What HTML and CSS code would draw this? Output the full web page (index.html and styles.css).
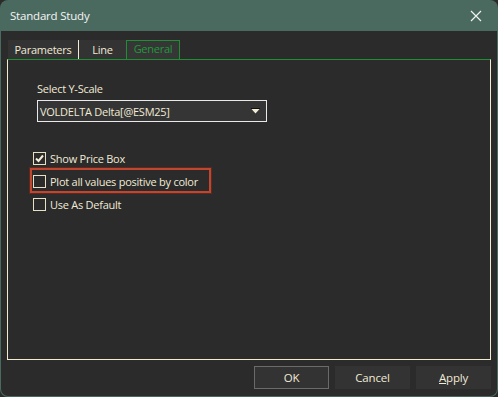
FILE: index.html
```html
<!DOCTYPE html>
<html lang="en">
<head>
    <meta charset="UTF-8">
    <title>Standard Study</title>
    <link rel="stylesheet" href="styles.css">
</head>
<body>
    <div class="window">
        <div class="titlebar">
            <span class="title">Standard Study</span>
            <svg class="close" width="12" height="12" viewBox="0 0 12 12">
                <path d="M1 1 L11 11 M11 1 L1 11" stroke="#f2f2f2" stroke-width="1.2" fill="none"/>
            </svg>
        </div>
        <div class="client">
            <div class="tabs">
                <div class="tab tab-params">Parameters</div>
                <div class="tab tab-line">Line</div>
                <div class="tab tab-general active">General</div>
            </div>
            <div class="panel">
                <div class="field">
                    <label class="field-label">Select Y-Scale</label>
                    <div class="select">
                        <span>VOLDELTA Delta[@ESM25]</span>
                        <svg class="arrow" width="9" height="6" viewBox="0 0 9 6">
                            <path d="M0 0.5 L9 0.5" stroke="#111" stroke-width="1"/>
                            <path d="M0.5 1 L8.5 1 L4.5 5.5 Z" fill="#f3ecd6"/>
                        </svg>
                    </div>
                </div>
                <div class="checks">
                    <div class="check">
                        <span class="box">
                            <svg width="11" height="11" viewBox="0 0 11 11">
                                <path d="M2 5.5 L4.5 8 L9 2.5" stroke="#f3ecd6" stroke-width="2" fill="none"/>
                            </svg>
                        </span>
                        <span>Show Price Box</span>
                    </div>
                    <div class="check marked">
                        <span class="box"></span>
                        <span>Plot all values positive by color</span>
                    </div>
                    <div class="check">
                        <span class="box"></span>
                        <span>Use As Default</span>
                    </div>
                </div>
            </div>
            <div class="buttons">
                <button class="btn default">OK</button>
                <button class="btn">Cancel</button>
                <button class="btn"><u>A</u>pply</button>
            </div>
        </div>
    </div>
</body>
</html>
```

FILE: styles.css
```css
body {
    margin: 0;
    padding: 0;
    background: #2b2b2b;
    font-family: "Open Sans", Arial, sans-serif;
    font-size: 11px;
    letter-spacing: -0.25px;
    color: #f1ead6;
}
.window {
    width: 498px;
    height: 397px;
    background: #4a6a60;
    border-radius: 8px 8px 8px 8px;
    display: flex;
    flex-direction: column;
    box-sizing: border-box;
}
.titlebar {
    height: 31px;
    display: flex;
    align-items: center;
    justify-content: space-between;
    padding: 0 16px 0 10px;
    flex-shrink: 0;
}
.title {
    color: #f4f4f4;
    font-size: 11.5px;
    letter-spacing: -0.2px;
}
.close {
    display: block;
}
.client {
    flex: 1;
    background: #2b2b2b;
    margin: 0 1px 1px 1px;
    border-radius: 0 0 7px 7px;
    padding: 9px 6px 7px 6px;
    display: flex;
    flex-direction: column;
}
.tabs {
    display: flex;
    height: 19px;
    padding-left: 1px;
}
.tab {
    background: #333333;
    line-height: 20px;
    text-align: center;
    box-sizing: border-box;
}
.tab-params {
    width: 70px;
}
.tab-line {
    width: 48px;
    border-left: 1px solid #f1ead6;
}
.tab-general {
    width: 54px;
}
.tab.active {
    background: #363636;
    color: #1f9a3a;
    border: 1px solid #1e8f32;
    border-bottom: none;
    line-height: 16px;
}
.panel {
    flex: 1;
    border: 1px solid #f4ebcc;
    border-top: 1px solid #1e8f32;
    padding: 21px 0 0 25px;
}
.field {
    margin-left: 4px;
}
.field-label {
    display: block;
    line-height: 15px;
    margin-bottom: 4px;
}
.select {
    width: 230px;
    height: 22px;
    box-sizing: border-box;
    border: 1px solid #e9e9e9;
    background: #353535;
    display: flex;
    align-items: center;
    justify-content: space-between;
    padding: 0 6px 0 2px;
}
.arrow {
    display: block;
}
.checks {
    margin-top: 29px;
    display: flex;
    flex-direction: column;
    gap: 9px;
}
.check {
    display: flex;
    align-items: center;
    gap: 4px;
    height: 14px;
    position: relative;
}
.box {
    width: 13px;
    height: 13px;
    border: 1px solid #e8e0c4;
    box-sizing: border-box;
    display: flex;
    align-items: center;
    justify-content: center;
}
.box svg {
    display: block;
}
.check.marked::after {
    content: "";
    position: absolute;
    left: -3px;
    top: -6px;
    width: 181px;
    height: 25px;
    box-sizing: border-box;
    border: 2px solid #c1462f;
    box-shadow: 0 0 0 1px #5a2a20;
}
.buttons {
    display: flex;
    justify-content: flex-end;
    gap: 6px;
    margin-top: 6px;
}
.btn {
    width: 75px;
    height: 23px;
    background: #333333;
    border: 1px solid #333333;
    color: #f1ead6;
    font-family: inherit;
    font-size: 11.5px;
    letter-spacing: -0.2px;
    padding: 0;
}
.btn.default {
    border-color: #6a6a6a;
}
```
